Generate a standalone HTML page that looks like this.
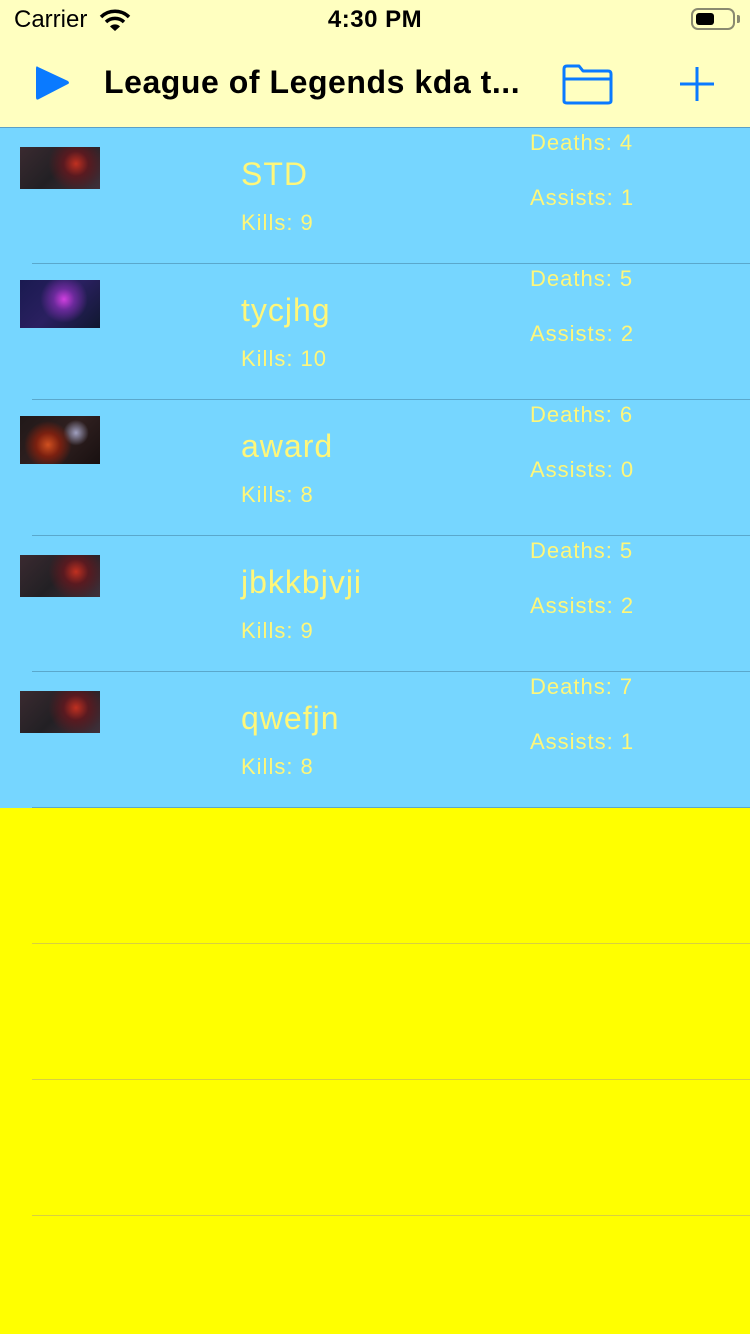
<!DOCTYPE html>
<html><head><meta charset="utf-8"><style>
*{margin:0;padding:0;box-sizing:border-box}
body{width:750px;height:1334px;position:relative;overflow:hidden;background:#ffff00;font-family:"Liberation Sans",sans-serif}
.a{position:absolute}
.hdr{left:0;top:0;width:750px;height:128px;background:#ffffc0;border-bottom:1px solid #5aa0c8}
.list{left:0;top:128px;width:750px;height:680px;background:#76d6ff}
.sep{position:absolute;left:32px;right:0;height:1px;background:#5aa8cc}
.t{position:absolute;color:#fff77a;white-space:nowrap;letter-spacing:1px}
.img1{background:radial-gradient(circle at 70% 40%,#c03020 0,#5a1a20 20%,transparent 45%),linear-gradient(135deg,#3a2a30,#222024 50%,#40303a)}
.img2{background:radial-gradient(circle at 55% 40%,#d040e0 0,#6a2a9a 20%,transparent 45%),linear-gradient(135deg,#1a1a50,#2a2060 50%,#101830)}
.img3{background:radial-gradient(circle at 35% 60%,#d05020 0,#7a2010 20%,transparent 40%),radial-gradient(circle at 70% 35%,#a0a0c0 0,transparent 20%),linear-gradient(135deg,#201818,#302020 50%,#181010)}
</style></head><body>
<div class="a hdr"></div>
<div class="a" style="left:14px;top:6px;font-size:24px;color:#000">Carrier</div>
<svg class="a" style="left:99px;top:9px" width="32" height="22" viewBox="0 0 32 22"><path d="M2 8a20 20 0 0 1 28 0" stroke="#000" stroke-width="3.5" fill="none"/><path d="M7 13a13 13 0 0 1 18 0" stroke="#000" stroke-width="3.5" fill="none"/><path d="M11 17.5l5 4.5 5-4.5a7 7 0 0 0-10 0z" fill="#000"/></svg>
<div class="a" style="left:0;width:750px;top:6px;text-align:center;font-size:24px;font-weight:bold;color:#000;letter-spacing:0.5px">4:30 PM</div>
<div class="a" style="left:691px;top:8px;width:44px;height:22px;border:2px solid #8a8a70;border-radius:7px"></div>
<div class="a" style="left:696px;top:13px;width:18px;height:12px;background:#000;border-radius:3px"></div>
<div class="a" style="left:737px;top:15px;width:3px;height:8px;background:#8a8a70;border-radius:0 2px 2px 0"></div>
<svg class="a" style="left:35px;top:64px" width="36" height="38" viewBox="0 0 36 38"><path d="M3 3Q1 1 1 5V33Q1 37 4 35L33 20Q35 19 33 17Z" fill="#0a7aff"/></svg>
<div class="a" style="left:104px;top:64px;font-size:32px;font-weight:bold;color:#000;letter-spacing:0.55px">League of Legends kda t...</div>
<svg class="a" style="left:560px;top:63px" width="54" height="42" viewBox="0 0 54 42"><path d="M4 38V6Q4 3 7 3H19L23 8H48Q51 8 51 11V38Q51 40 48 40H7Q4 40 4 38Z M4 16H51" stroke="#0a7aff" stroke-width="3" fill="none" stroke-linejoin="round"/></svg>
<svg class="a" style="left:678px;top:65px" width="38" height="38" viewBox="0 0 38 38"><path d="M19 2V36M2 19H36" stroke="#0a7aff" stroke-width="3"/></svg>
<div class="a list"></div>

<div class="a img1" style="left:20px;top:147px;width:80px;height:42px"></div>
<div class="t" style="left:241px;top:156px;font-size:32px">STD</div>
<div class="t" style="left:241px;top:210px;font-size:22px">Kills: 9</div>
<div class="t" style="left:530px;top:130px;font-size:22px">Deaths: 4</div>
<div class="t" style="left:530px;top:185px;font-size:22px">Assists: 1</div>
<div class="sep" style="top:263px"></div>

<div class="a img2" style="left:20px;top:280px;width:80px;height:48px"></div>
<div class="t" style="left:241px;top:292px;font-size:32px">tycjhg</div>
<div class="t" style="left:241px;top:346px;font-size:22px">Kills: 10</div>
<div class="t" style="left:530px;top:266px;font-size:22px">Deaths: 5</div>
<div class="t" style="left:530px;top:321px;font-size:22px">Assists: 2</div>
<div class="sep" style="top:399px"></div>

<div class="a img3" style="left:20px;top:416px;width:80px;height:48px"></div>
<div class="t" style="left:241px;top:428px;font-size:32px">award</div>
<div class="t" style="left:241px;top:482px;font-size:22px">Kills: 8</div>
<div class="t" style="left:530px;top:402px;font-size:22px">Deaths: 6</div>
<div class="t" style="left:530px;top:457px;font-size:22px">Assists: 0</div>
<div class="sep" style="top:535px"></div>

<div class="a img1" style="left:20px;top:555px;width:80px;height:42px"></div>
<div class="t" style="left:241px;top:564px;font-size:32px">jbkkbjvji</div>
<div class="t" style="left:241px;top:618px;font-size:22px">Kills: 9</div>
<div class="t" style="left:530px;top:538px;font-size:22px">Deaths: 5</div>
<div class="t" style="left:530px;top:593px;font-size:22px">Assists: 2</div>
<div class="sep" style="top:671px"></div>

<div class="a img1" style="left:20px;top:691px;width:80px;height:42px"></div>
<div class="t" style="left:241px;top:700px;font-size:32px">qwefjn</div>
<div class="t" style="left:241px;top:754px;font-size:22px">Kills: 8</div>
<div class="t" style="left:530px;top:674px;font-size:22px">Deaths: 7</div>
<div class="t" style="left:530px;top:729px;font-size:22px">Assists: 1</div>
<div class="sep" style="top:807px"></div>

<div class="sep" style="top:943px;background:#d8d040"></div>
<div class="sep" style="top:1079px;background:#d8d040"></div>
<div class="sep" style="top:1215px;background:#d8d040"></div>
</body></html>
